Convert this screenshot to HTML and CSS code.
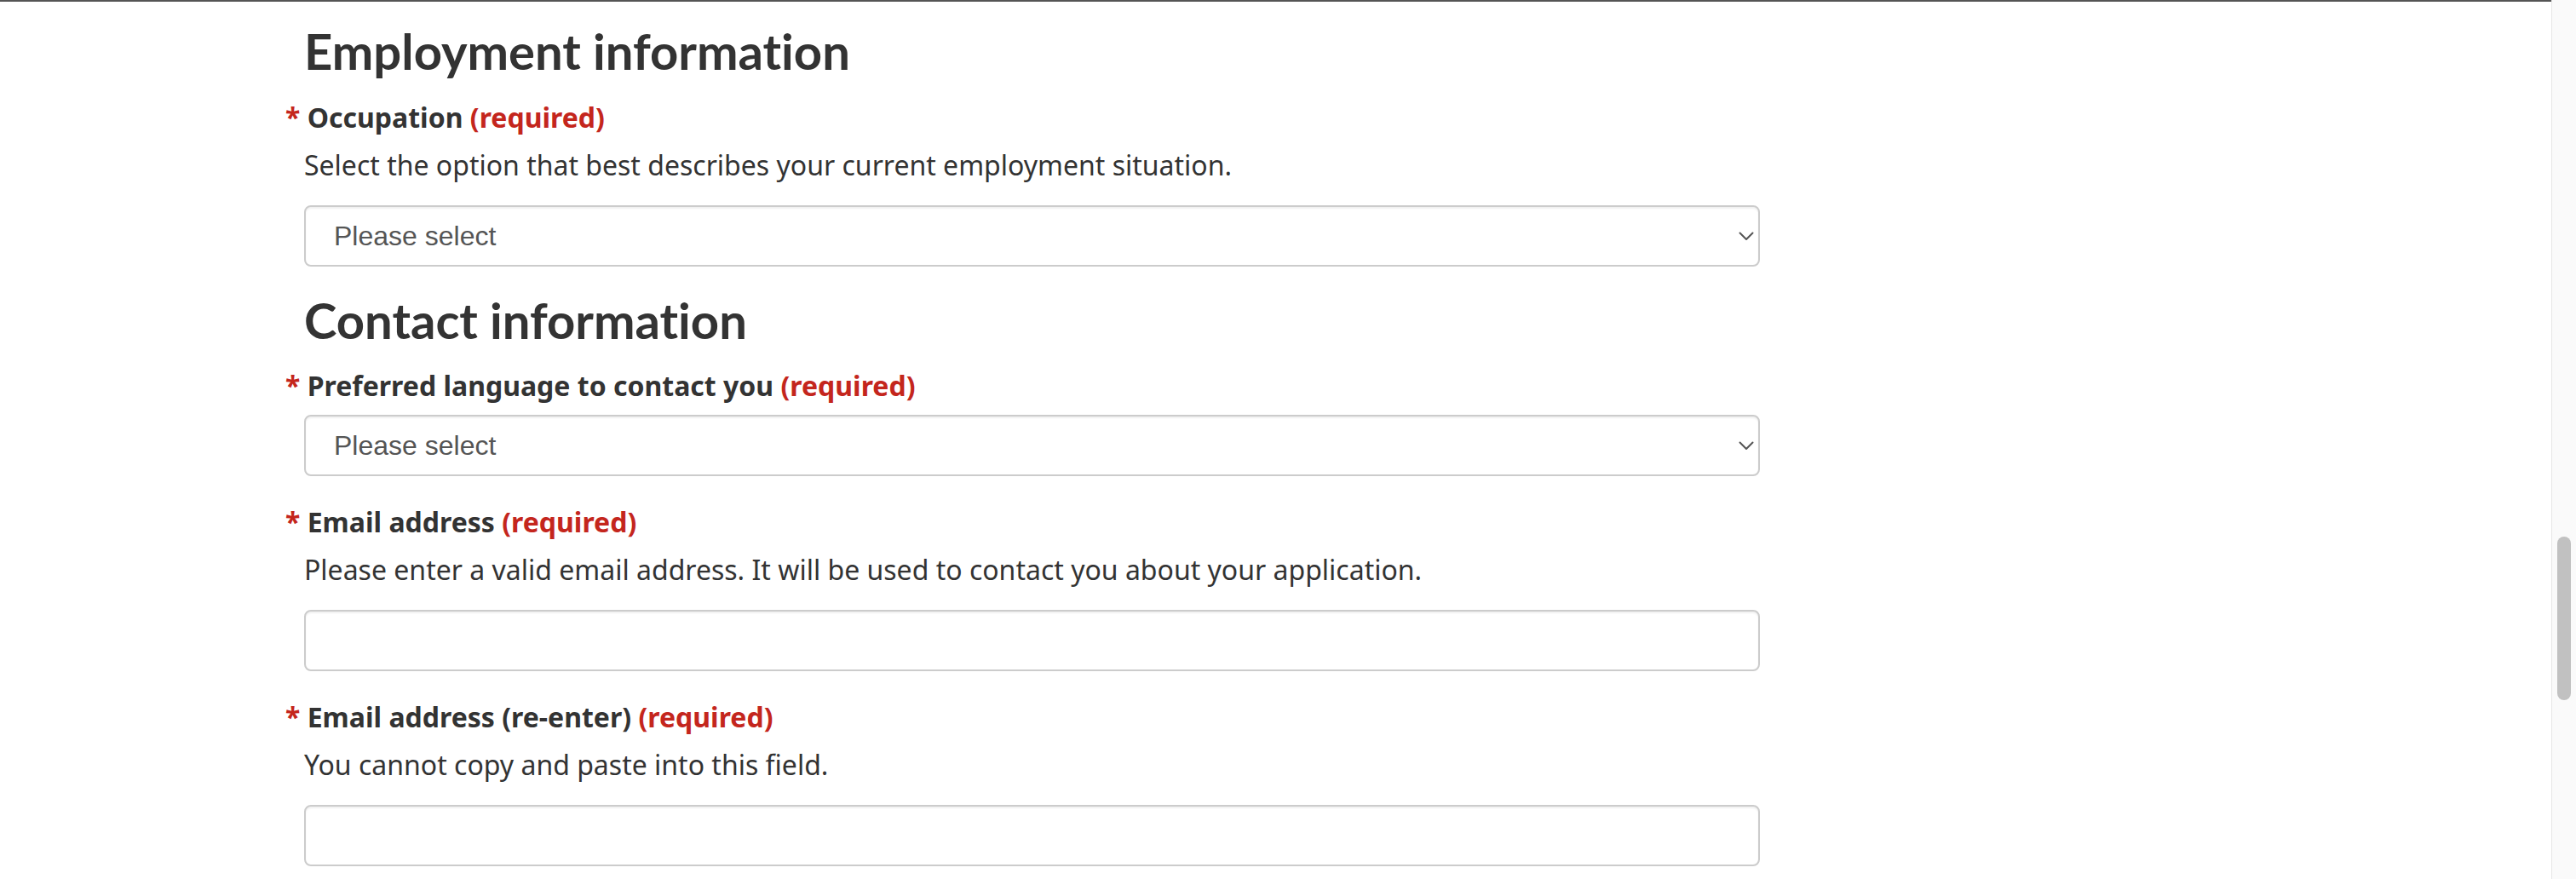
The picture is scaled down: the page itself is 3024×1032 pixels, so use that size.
FILE: index.html
```html
<!DOCTYPE html>
<html lang="en">
<head>
<meta charset="utf-8">
<title>Application form</title>
<link rel="stylesheet" href="styles.css">
</head>
<body>
<div class="page">
  <main class="form">
    <section class="section">
      <h2 class="section-title">Employment information</h2>
      <div class="field">
        <label class="field-label" for="occupation"><span class="req-mark">*</span> Occupation <span class="req">(required)</span></label>
        <p class="hint">Select the option that best describes your current employment situation.</p>
        <div class="select-wrap">
          <select id="occupation" class="control control-select"><option>Please select</option></select>
          <svg class="chevron" width="18" height="11" viewBox="0 0 18 11" aria-hidden="true"><path d="M1.5 1.5 L9 9 L16.5 1.5" fill="none" stroke="#555" stroke-width="2" stroke-linecap="round" stroke-linejoin="round"/></svg>
        </div>
      </div>
    </section>
    <section class="section">
      <h2 class="section-title">Contact information</h2>
      <div class="field">
        <label class="field-label field-label-solo" for="language"><span class="req-mark">*</span> Preferred language to contact you <span class="req">(required)</span></label>
        <div class="select-wrap">
          <select id="language" class="control control-select"><option>Please select</option></select>
          <svg class="chevron" width="18" height="11" viewBox="0 0 18 11" aria-hidden="true"><path d="M1.5 1.5 L9 9 L16.5 1.5" fill="none" stroke="#555" stroke-width="2" stroke-linecap="round" stroke-linejoin="round"/></svg>
        </div>
      </div>
      <div class="field">
        <label class="field-label" for="email"><span class="req-mark">*</span> Email address <span class="req">(required)</span></label>
        <p class="hint">Please enter a valid email address. It will be used to contact you about your application.</p>
        <input id="email" class="control" type="email">
      </div>
      <div class="field">
        <label class="field-label" for="email2"><span class="req-mark">*</span> Email address (re-enter) <span class="req">(required)</span></label>
        <p class="hint">You cannot copy and paste into this field.</p>
        <input id="email2" class="control" type="email">
      </div>
    </section>
  </main>
  <div class="scrollbar"><div class="scrollbar-thumb"></div></div>
</div>
</body>
</html>
```
FILE: styles.css
```css
html, body {
  margin: 0;
  padding: 0;
  height: 1032px;
  overflow: hidden;
  background: #fff;
}

.page {
  height: 1032px;
  box-sizing: border-box;
  border-top: 2px solid #555;
  font-family: "Noto Sans", "Open Sans", sans-serif;
  color: #333;
}

.form {
  width: 1709px;
  padding: 23px 0 0 357px;
}

.section-title {
  margin: 0 0 19px;
  font-family: Lato, "Noto Sans", sans-serif;
  font-weight: 700;
  font-size: 58px;
  line-height: 1.2;
  color: #333;
  font-variant-ligatures: none;
  font-feature-settings: "liga" 0, "clig" 0;
}

.field {
  margin-bottom: 30px;
}

.section > .field:last-child {
  margin-bottom: 28px;
}

.field-label {
  display: block;
  margin: 0 0 8px -22px;
  font-size: 32px;
  line-height: 48px;
  font-weight: 700;
  color: #333;
}

.field-label-solo {
  margin-bottom: 10px;
}

.req-mark,
.req {
  color: #c4261d;
}

.hint {
  margin: 0 0 23px;
  font-size: 32px;
  line-height: 48px;
  font-weight: 400;
  color: #333;
}

.control {
  display: block;
  width: 1709px;
  height: 72px;
  box-sizing: border-box;
  margin: 0;
  border: 2px solid #cccccc;
  border-radius: 8px;
  background: #fff;
  box-shadow: inset 0 2px 2px rgba(0, 0, 0, 0.06);
  font-family: "Liberation Sans", Arial, sans-serif;
  font-size: 32px;
  color: #555;
  outline: none;
}

.control-select {
  -webkit-appearance: none;
  appearance: none;
  padding: 0 60px 0 33px;
}

.select-wrap {
  position: relative;
  width: 1709px;
}

.chevron {
  position: absolute;
  right: 7px;
  top: 31px;
  pointer-events: none;
}

.scrollbar {
  position: fixed;
  top: 0;
  right: 0;
  width: 28px;
  height: 1032px;
  background: #fafafa;
  border-left: 1px solid #e6e6e6;
}

.scrollbar-thumb {
  position: absolute;
  left: 6px;
  top: 630px;
  width: 16px;
  height: 192px;
  border-radius: 8px;
  background: #c1c1c1;
}
```
